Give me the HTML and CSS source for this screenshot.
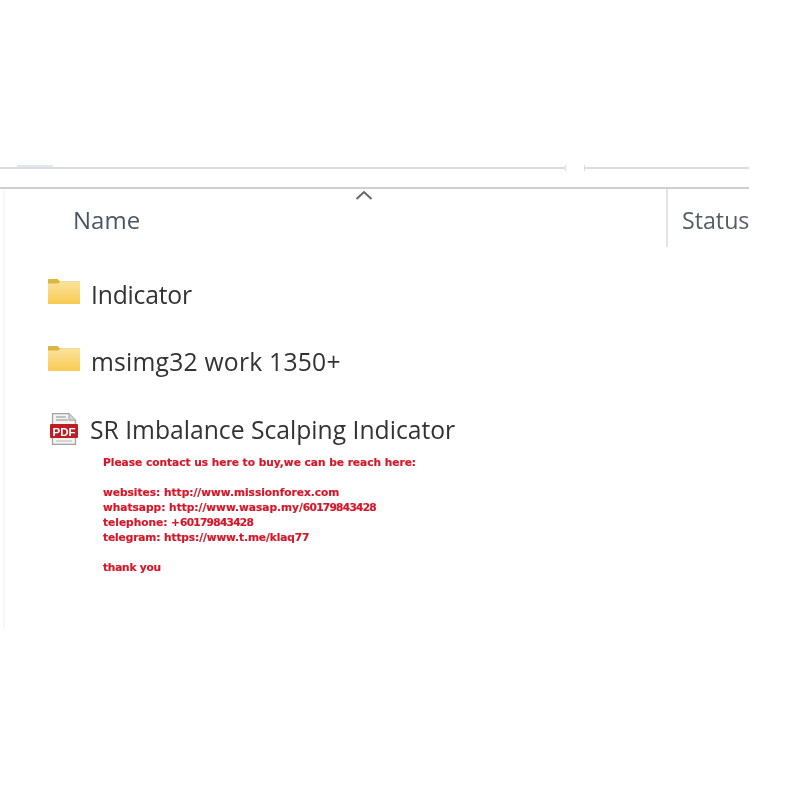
FILE: index.html
```html
<!DOCTYPE html>
<html lang="en">
<head>
<meta charset="utf-8">
<title>SR Imbalance Scalping Indicator</title>
<link rel="stylesheet" href="styles.css">
</head>
<body>
<main class="shot">
  <div class="toolbar">
    <div class="tab-mark"></div>
    <div class="rule-a"></div>
    <div class="rule-b"></div>
  </div>
  <div class="pane">
    <div class="head">
      <div class="col-name">Name</div>
      <svg class="caret" viewBox="0 0 18 10" aria-hidden="true"><path d="M1.5 9 9 2l7.5 7"/></svg>
      <div class="col-status">Status</div>
    </div>
    <div class="row row-one">
      <svg class="folder" viewBox="0 0 32 25" aria-hidden="true">
        <defs><linearGradient id="fg" x1="0" y1="0" x2="0" y2="1"><stop offset="0" stop-color="#fbe29a"/><stop offset="1" stop-color="#f8cb52"/></linearGradient></defs>
        <path d="M0 1C0 .4.4 0 1 0h8.500L12 2.500h20V25H0z" fill="#dfb43f"/>
        <path d="M0 4.500 10 4.500 12 3h20V25H0z" fill="url(#fg)"/>
      </svg>
      <span>Indicator</span>
    </div>
    <div class="row row-two">
      <svg class="folder" viewBox="0 0 32 25" aria-hidden="true">
        <path d="M0 1C0 .4.4 0 1 0h8.500L12 2.500h20V25H0z" fill="#dfb43f"/>
        <path d="M0 4.500 10 4.500 12 3h20V25H0z" fill="url(#fg)"/>
      </svg>
      <span>msimg32 work 1350+</span>
    </div>
    <div class="row row-three">
      <svg class="pdf" viewBox="0 0 28 32" aria-hidden="true">
        <path d="M2.500 .7H19l6.500 6.500V31.300H2.500z" fill="#f2f2f2" stroke="#a3a3a3" stroke-width="1.300"/>
        <path d="M19 .7v6.500h6.500" fill="#d6d6d6" stroke="#a3a3a3"/>
        <path d="M6 4h10M6 7h12" stroke="#b0b0b0" stroke-width="1.300"/>
        <path d="M6 28h16" stroke="#c4c4c4" stroke-width="1.300"/>
        <rect y="11" width="28" height="14" rx="1" fill="#bd1e26"/>
        <text x="14" y="22.500" class="pdf-label">PDF</text>
      </svg>
      <span>SR Imbalance Scalping Indicator</span>
    </div>
    <div class="contact">
      <p>Please contact us here to buy,we can be reach here:</p>
      <p>websites: http://www.missionforex.com<br>
      whatsapp: http://www.wasap.my/<span class="num">60179843428</span><br>
      telephone: +<span class="num">60179843428</span><br>
      <span class="snug">telegram: https://www.t.me/klaq77</span></p>
      <p><span class="tight">thank you</span></p>
    </div>
  </div>
</main>
</body>
</html>
```
FILE: styles.css
```css
* { box-sizing: border-box; }
html, body { margin: 0; background: #fff; }
.shot { width: 794px; height: 794px; padding-top: 162px; overflow: hidden; filter: blur(.45px); }

.toolbar { width: 749px; height: 27px; border-bottom: 2px solid #cfcfcf; position: relative; }
.rule-a, .rule-b { position: absolute; top: 5px; height: 2px; background: #dcdcdc; }
.rule-a { left: 0; width: 566px; }
.rule-b { left: 584px; width: 165px; }
.rule-a::after, .rule-b::before { content: ""; position: absolute; top: -2px; width: 1px; height: 6px; background: #dcdcdc; }
.rule-a::after { right: 0; }
.rule-b::before { left: 0; }
.tab-mark { position: absolute; left: 17px; top: 3px; width: 36px; height: 2px; background: #dfe9f3; }

.pane { width: 749px; height: 441px; margin-left: 3px; border-left: 2px solid #f7f7f7; font-family: "Open Sans", "Noto Sans", sans-serif; }

.head { display: flex; align-items: flex-start; height: 58px; position: relative; }
.col-name { margin: 13px 0 0 68px; font-size: 24px; line-height: 36px; color: #4a5666; }
.caret { position: absolute; left: 350px; top: 1px; width: 18px; height: 10px; fill: none; stroke: #666; stroke-width: 2; }
.col-status { position: absolute; left: 661px; top: 0; height: 58px; padding: 13px 0 0 14px; border-left: 2px solid #e4e4e4; font-size: 23.2px; line-height: 36px; color: #555d66; white-space: nowrap; }

.row { display: flex; align-items: center; height: 40px; padding-left: 43px; font-size: 24.7px; color: #333; white-space: nowrap; }
.row span { margin-left: 11px; }
.folder { width: 32px; height: 25px; flex: none; margin-bottom: 6px; }
.pdf { width: 28px; height: 32px; margin: 0 0 1px 2px; flex: none; }
.pdf + span { margin-left: 12px; }
.pdf-label { font: bold 11.500px "Liberation Sans", sans-serif; fill: #fff; text-anchor: middle; }
.row-one { margin-top: 27px; letter-spacing: -.2px; }
.row-two { margin-top: 27px; letter-spacing: .22px; }
.row-three { margin-top: 28px; }

.contact { margin: 6px 0 0 98px; font-family: "DejaVu Sans", Verdana, sans-serif; font-weight: 700; font-size: 10.6px; line-height: 15px; color: #d4182a; white-space: nowrap; -webkit-text-stroke: .2px #d4182a; }
.contact p { margin: 0 0 15px; }
.num { letter-spacing: -.72px; }
.snug { letter-spacing: -.1px; }
.tight { letter-spacing: -.22px; }
```
